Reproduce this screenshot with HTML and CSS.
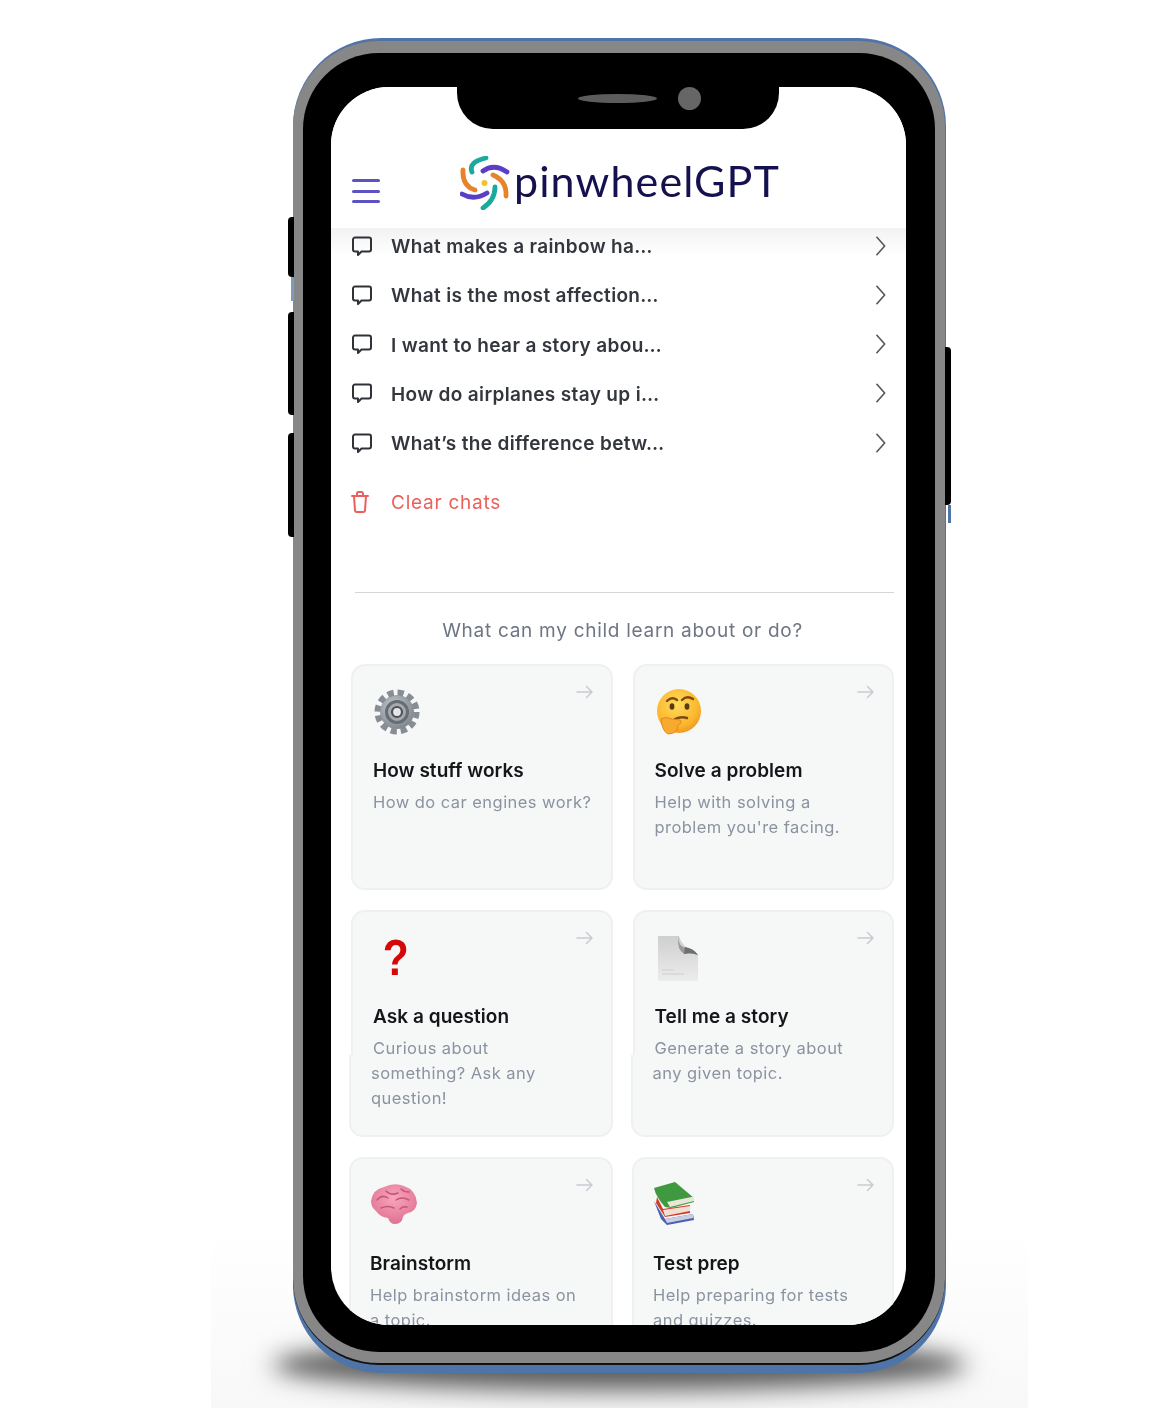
FILE: index.html
```html
<!DOCTYPE html>
<html lang="en">
<head>
<meta charset="utf-8">
<title>pinwheelGPT</title>
<link rel="stylesheet" href="styles.css">
</head>
<body>
<svg class="defs" width="0" height="0" aria-hidden="true">
  <defs>
    <symbol id="bubble" viewBox="0 0 22 22"><path d="M4 2.500h14a2 2 0 0 1 2 2v10a2 2 0 0 1-2 2h-7.500l-3.500 3.500v-3.500h-3a2 2 0 0 1-2-2v-10a2 2 0 0 1 2-2z" fill="none" stroke="#2f3338" stroke-width="2" stroke-linejoin="round"/></symbol>
    <symbol id="chev" viewBox="0 0 14 24"><path d="M2.500 2.500l8.500 9.500-8.500 9.500" fill="none" stroke="#55595f" stroke-width="1.800" stroke-linecap="round" stroke-linejoin="round"/></symbol>
    <symbol id="arrow" viewBox="0 0 18 14"><path d="M1 7h15M10.500 1.500L16 7l-5.500 5.500" fill="none" stroke="#c8ccd2" stroke-width="1.500" stroke-linecap="round" stroke-linejoin="round"/></symbol>
    <radialGradient id="face" cx="45%" cy="35%" r="70%"><stop offset="0" stop-color="#ffdb5c"/><stop offset=".7" stop-color="#fbb72c"/><stop offset="1" stop-color="#ef8f20"/></radialGradient>
    <linearGradient id="paper" x1="0" y1="0" x2="0" y2="1"><stop offset="0" stop-color="#cfcfcf"/><stop offset="1" stop-color="#ececec"/></linearGradient>
    <radialGradient id="pink" cx="50%" cy="35%" r="70%"><stop offset="0" stop-color="#f8a6bd"/><stop offset="1" stop-color="#de6d8e"/></radialGradient>
    <radialGradient id="steel" cx="40%" cy="35%" r="70%"><stop offset="0" stop-color="#c4c9ce"/><stop offset="1" stop-color="#7d848b"/></radialGradient>
  </defs>
</svg>
<main class="stage">
  <div class="ground"><div class="ground-shadow"></div></div>
  <div class="phone">
    <span class="btn btn-l1"></span><span class="btn btn-l2"></span><span class="btn btn-l3"></span><span class="btn btn-r"></span>
    <span class="tint tint-l"></span><span class="tint tint-r"></span>
    <div class="phone-bezel">
      <div class="phone-black">
        <div class="screen">
          <div class="notch"><span class="speaker"></span><span class="camera"></span></div>
          <header class="header">
            <button class="menu" aria-label="Menu"><span></span><span></span><span></span></button>
            <div class="logo">
              <svg class="logo-mark" viewBox="0 0 50 54" width="50" height="54">
                <g fill="none" stroke-width="4.800" stroke-linecap="round" stroke-linejoin="round">
                  <path d="M12 16Q8 6 26 2" stroke="#1aa99c"/>
                  <path d="M23 15Q34 7 47 16" stroke="#5a3fc6"/>
                  <path d="M33 19Q47 25 46 40" stroke="#e8832a"/>
                  <path d="M35 31Q35 44 23 52" stroke="#1aa99c"/>
                  <path d="M27 37Q14 45 2 38" stroke="#5a3fc6"/>
                  <path d="M15 34Q2 30 3 14" stroke="#e8832a"/>
                </g>
                <circle cx="24.500" cy="27" r="3" fill="#f2c230"/>
              </svg>
              <span class="logo-text">pinwheelGPT</span>
            </div>
          </header>
          <ul class="chats">
            <li class="chat"><svg class="ico"><use href="#bubble"/></svg><span class="chat-text">What makes a rainbow ha…</span><svg class="chev"><use href="#chev"/></svg></li>
            <li class="chat"><svg class="ico"><use href="#bubble"/></svg><span class="chat-text">What is the most affection…</span><svg class="chev"><use href="#chev"/></svg></li>
            <li class="chat"><svg class="ico"><use href="#bubble"/></svg><span class="chat-text">I want to hear a story abou…</span><svg class="chev"><use href="#chev"/></svg></li>
            <li class="chat"><svg class="ico"><use href="#bubble"/></svg><span class="chat-text">How do airplanes stay up i…</span><svg class="chev"><use href="#chev"/></svg></li>
            <li class="chat"><svg class="ico"><use href="#bubble"/></svg><span class="chat-text">What’s the difference betw…</span><svg class="chev"><use href="#chev"/></svg></li>
            <li class="chat chat-clear">
              <svg class="ico" viewBox="0 0 22 24"><path d="M3 6h16M8 6V3.500a1.500 1.500 0 0 1 1.500-1.500h3a1.500 1.500 0 0 1 1.500 1.500V6M5 6l1 14.500a1.800 1.800 0 0 0 1.800 1.500h6.400a1.800 1.800 0 0 0 1.800-1.500L17 6" fill="none" stroke="#e9605c" stroke-width="2" stroke-linecap="round" stroke-linejoin="round"/></svg>
              <span class="chat-text clear-text">Clear chats</span>
            </li>
          </ul>
          <hr class="divider">
          <h2 class="prompt">What can my child learn about or do?</h2>
          <section class="cards">
            <article class="card">
              <svg class="arrow"><use href="#arrow"/></svg>
              <svg class="emoji" viewBox="0 0 48 48"><circle cx="24" cy="24" r="17" fill="url(#steel)"/><circle cx="24" cy="24" r="19.500" fill="none" stroke="#868d94" stroke-width="6" stroke-dasharray="6.200 4.010"/><circle cx="24" cy="24" r="10.500" fill="#a4aab0" stroke="#666d74" stroke-width="3"/><circle cx="24" cy="24" r="5" fill="#e4e6e8" stroke="#4c5258" stroke-width="2.200"/></svg>
              <h3 class="card-title">How stuff works</h3>
              <p class="card-desc">How do car engines work?</p>
            </article>
            <article class="card">
              <svg class="arrow"><use href="#arrow"/></svg>
              <svg class="emoji" viewBox="0 0 48 48"><circle cx="24" cy="23" r="22" fill="url(#face)"/><path d="M12 13q5-5 10-1M27 12q5-5 11-1" fill="none" stroke="#7a4a12" stroke-width="2.400" stroke-linecap="round"/><ellipse cx="17" cy="18.500" rx="2.400" ry="3.200" fill="#5b3a16"/><ellipse cx="32" cy="18.500" rx="2.400" ry="3.200" fill="#5b3a16"/><path d="M20 31q6-3 12-1" fill="none" stroke="#7a4a12" stroke-width="2.400" stroke-linecap="round"/><path d="M6 31q5-3 11 0l8 1q3 3-2 5l-1 5q-3 4-9 4-6-3-7-15z" fill="#f8a92e" stroke="#e18a1e" stroke-width="1"/></svg>
              <h3 class="card-title">Solve a problem</h3>
              <p class="card-desc">Help with solving a<br>problem you're facing.</p>
            </article>
            <article class="card card-split">
              <div class="split-top">
                <svg class="arrow"><use href="#arrow"/></svg>
                <span class="emoji emoji-q">?</span>
                <h3 class="card-title">Ask a question</h3>
                <p class="card-desc">Curious about</p>
              </div>
              <div class="split-bottom"><p class="card-desc">something? Ask any<br>question!</p></div>
            </article>
            <article class="card card-split">
              <div class="split-top">
                <svg class="arrow"><use href="#arrow"/></svg>
                <svg class="emoji" viewBox="0 0 48 48"><path d="M3 2h21q2 10 19 19v26H3z" fill="url(#paper)"/><path d="M23 2q0 11 9 12 7 1 11 7-7-3-14-1-7-4-6-18z" fill="#9a9a9a"/><path d="M30 13q8 1 13 8-7-3-14-1z" fill="#6f6f6f"/><path d="M7 36h12M7 40h22" stroke="#d6d6d6" stroke-width="1.500"/></svg>
                <h3 class="card-title">Tell me a story</h3>
                <p class="card-desc">Generate a story about</p>
              </div>
              <div class="split-bottom"><p class="card-desc">any given topic.</p></div>
            </article>
            <article class="card card-low">
              <svg class="arrow"><use href="#arrow"/></svg>
              <svg class="emoji" viewBox="0 0 48 48"><path d="M1 20Q3 8 14 6Q24 1 34 5Q46 9 47 22Q46 30 38 32Q34 33 33 36Q32 43 25 43Q20 43 18 37Q10 36 6 30Q1 26 1 20Z" fill="url(#pink)"/><path d="M7 19q5-6 11-2M16 10q5 5 12 2M26 19q6-4 13 0M11 27q7-3 13 0M30 28q3-3 7-2M31 8q3 3 8 3" fill="none" stroke="#c65577" stroke-width="1.500" stroke-linecap="round"/></svg>
              <h3 class="card-title">Brainstorm</h3>
              <p class="card-desc">Help brainstorm ideas on<br>a topic.</p>
            </article>
            <article class="card card-low card-low-r">
              <svg class="arrow"><use href="#arrow"/></svg>
              <svg class="emoji" viewBox="0 0 48 48"><path d="M1 20L12 38L40 33L41 39L14 44L8 38Z" fill="#4a60b0"/><path d="M12 38L40 33L40 37L14 42Z" fill="#c9cfe2"/><path d="M4 16L10 28L37 24L37 32L12 36L3 22Z" fill="#d23b2a"/><path d="M10 29L37 25L37 30L12 35Z" fill="#efe0d2"/><path d="M1 7L22 1L41 17L41 21L18 27L12 26Q3 16 1 7Z" fill="#3f9a3f"/><path d="M14 21L41 15.500L41 20L17 26Z" fill="#e8e6d6"/></svg>
              <h3 class="card-title">Test prep</h3>
              <p class="card-desc">Help preparing for tests<br>and quizzes.</p>
            </article>
          </section>
        </div>
      </div>
    </div>
  </div>
</main>
</body>
</html>
```
FILE: styles.css
```css
* { box-sizing: border-box; }
html, body { margin: 0; padding: 0; background: #fff; }
body { width: 1169px; height: 1408px; overflow: hidden; font-family: Inter, "Liberation Sans", sans-serif; }
.defs { position: absolute; }

.stage { position: relative; height: 1408px; padding: 38px 0 0 293px; }
.ground { position: absolute; left: 211px; top: 1230px; width: 817px; height: 178px; background: linear-gradient(rgba(248,248,248,0), #f8f8f8); overflow: hidden; }
.ground-shadow { position: absolute; left: 70px; top: 118px; width: 677px; height: 34px; border-radius: 50%; background: #5a5a5a; box-shadow: 0 0 16px 10px #777; filter: blur(10px); }

.phone { position: relative; width: 653px; height: 1335px; padding: 3px 1px 8px 0; border-radius: 88px; background: #4f74a8; }
.phone-bezel { height: 100%; padding: 12px 10px 11px 10px; border-radius: 86px; background: #878787; border-bottom: 2px solid #111; }
.phone-black { height: 100%; padding: 34px 29px 27px 28px; border-radius: 76px; background: #000; }
.screen { position: relative; height: 100%; overflow: hidden; border-radius: 58px; background: #fff; }

.btn { position: absolute; background: #000; border-radius: 4px 0 0 4px; width: 6px; }
.btn-l1 { left: -5px; top: 179px; height: 60px; }
.btn-l2 { left: -5px; top: 274px; height: 103px; }
.btn-l3 { left: -5px; top: 395px; height: 104px; }
.btn-r { right: -5px; top: 309px; height: 158px; border-radius: 0 4px 4px 0; }
.tint { position: absolute; width: 3px; background: #7f9abf; }
.tint-l { left: -2px; top: 239px; height: 24px; }
.tint-r { right: -5px; top: 467px; height: 18px; background: #4f74a8; }

.notch { position: absolute; z-index: 3; left: 126px; top: 0; width: 322px; height: 42px; background: #000; border-radius: 0 0 36px 36px; }
.speaker { position: absolute; left: 121px; top: 7px; width: 79px; height: 9px; border-radius: 50%; background: #5c5c5c; }
.camera { position: absolute; left: 221px; top: 0; width: 23px; height: 23px; border-radius: 50%; background: #666; }

.header { display: flex; height: 134px; padding: 69px 0 0 21px; background: #fff; }
.menu { display: flex; flex-direction: column; gap: 7.500px; width: 28px; height: 24px; margin: 23px 0 0 0; padding: 0; border: 0; background: none; }
.menu span { display: block; width: 28px; height: 3px; border-radius: 2px; background: #5d52c4; }
.logo { display: flex; align-items: flex-start; margin-left: 80px; filter: blur(.3px); }
.logo-mark { display: block; margin-top: 0; flex: none; }
.logo-text { margin: -5px 0 0 4px; font: 400 43px/60px Lato, sans-serif; letter-spacing: 1.100px; color: #15114f; }

.chats { margin: 0; padding: 0; list-style: none; background: linear-gradient(#fff 7px, #f2f2f2 7px, #fff 34px) no-repeat; }
.chat { display: flex; align-items: center; height: 49.250px; padding: 0 18px 0 20px; }
.ico { flex: none; width: 22px; height: 22px; }
.chat-text { flex: 1; margin: 2px 0 0 18px; font-size: 19px; font-weight: 600; letter-spacing: .35px; color: #33373d; white-space: nowrap; filter: blur(.3px); }
.chev { flex: none; width: 14px; height: 22px; }
.chat-clear { margin-top: 10px; }
.chat-clear .ico { height: 24px; margin-left: -2px; margin-right: 2px; }
.clear-text { font-weight: 400; letter-spacing: .75px; color: #e9605c; }

.divider { height: 1px; margin: 65px 12px 0 24px; border: 0; background: #d4d6da; }
.prompt { margin: 25px 0 0; padding-left: 8px; text-align: center; font-size: 19px; line-height: 26px; font-weight: 400; letter-spacing: .72px; color: #6e7583; filter: blur(.3px); }

.cards { display: grid; grid-template-columns: 262px 261.500px; column-gap: 19.500px; row-gap: 20px; margin-top: 20px; padding-left: 20px; }
.card { position: relative; height: 226px; padding: 22px 19px 0 20px; border: 2px solid #eff0f0; border-radius: 14px; background: #f6f7f7; }
.card-split { height: 227px; padding: 0; border: 0; background: none; }
.split-top { position: relative; height: 145px; padding: 22px 20px 0 20px; border: 2px solid #eff0f0; border-bottom: 0; border-radius: 14px 14px 0 0; background: #f6f7f7; }
.split-bottom { height: 82px; margin-left: -2px; padding: 6px 20px 0 20px; border: 2px solid #eff0f0; border-top: 0; border-radius: 0 0 14px 14px; background: #f6f7f7; }
.split-bottom .card-desc { margin: 0; }
.card-low { margin-left: -2px; padding-left: 19px; }
.card-low-r { margin-left: -.5px; }
.arrow { position: absolute; top: 19px; right: 17px; width: 18px; height: 14px; }
.emoji { display: block; width: 48px; height: 48px; filter: blur(.4px); }
.emoji-q { padding-right: 3px; font: 700 50px/48px "Liberation Sans", sans-serif; color: #d40808; text-align: center; transform: scaleX(.85); }
.card-title { margin: 21px 0 0; font-size: 19px; line-height: 28px; font-weight: 600; letter-spacing: .05px; color: #14161a; filter: blur(.3px); }
.card-desc { margin: 5px 0 0; font-size: 16.500px; line-height: 25px; letter-spacing: .45px; color: #8b93a1; white-space: nowrap; filter: blur(.3px); }
```
